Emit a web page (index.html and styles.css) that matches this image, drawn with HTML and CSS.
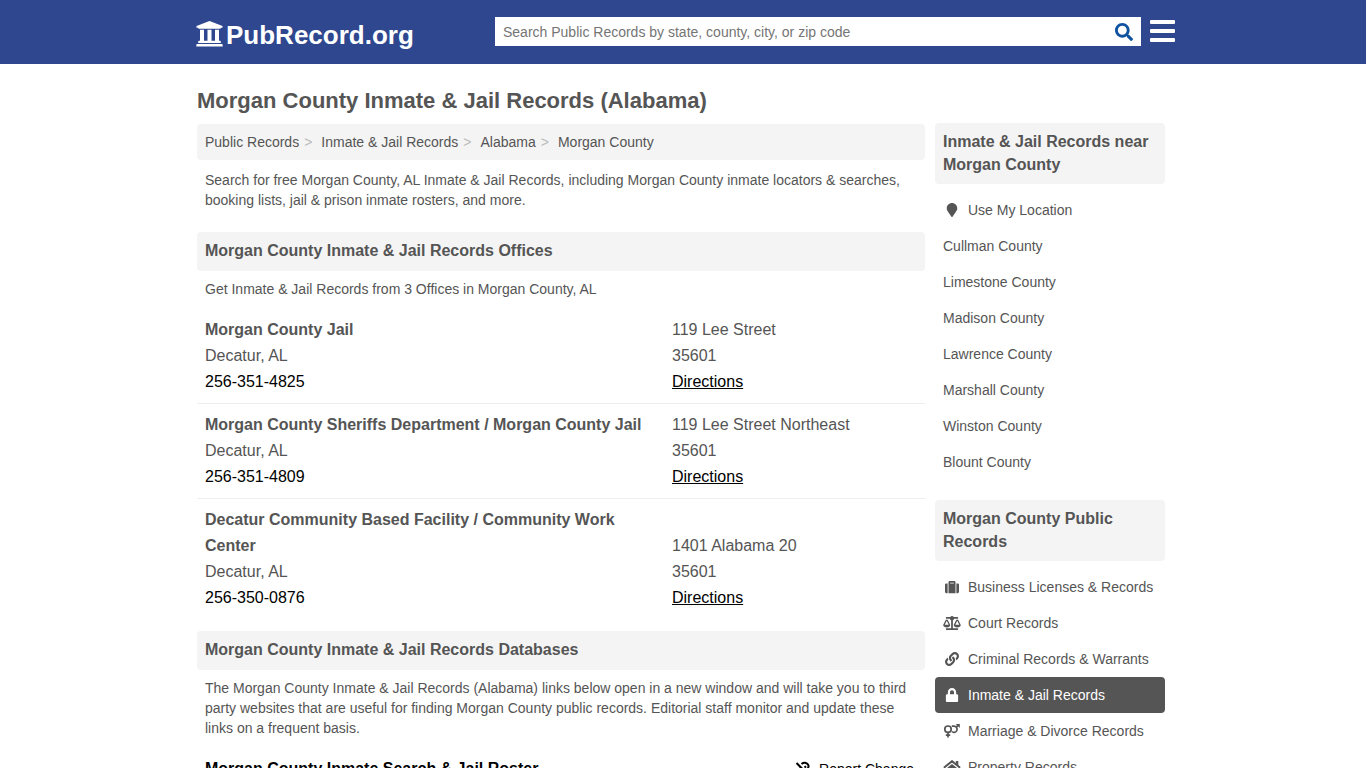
FILE: index.html
```html
<!DOCTYPE html>
<html lang="en">
<head>
<meta charset="utf-8">
<meta name="viewport" content="width=device-width, initial-scale=1">
<title>Morgan County Inmate &amp; Jail Records (Alabama)</title>
<link rel="stylesheet" href="styles.css">
</head>
<body>
<header class="site-header">
  <div class="header-row">
    <a class="logo" href="#">
      <svg class="logo-icon" viewBox="0 0 27 26" aria-hidden="true"><path d="M13.500 0 26.500 5v1.700h-1.700c0 .6-.4 1-1 1H3.200c-.6 0-1-.4-1-1H.5V5zM4 8.700h4v11.300H4zM11.500 8.700h4v11.300h-4zM19 8.700h4v11.300h-4zM3.200 19.800h20.600c.6 0 1 .4 1 1v1.200H2.200v-1.200c0-.6.400-1 1-1zM1.500 23h24c.7 0 1.200.5 1.200 1.200v1.300H.3v-1.300c0-.7.5-1.200 1.200-1.200z"/></svg>
      <span>PubRecord.org</span>
    </a>
    <div class="header-tools">
      <form class="search" role="search">
        <input class="search-input" type="text" aria-label="Search Public Records" placeholder="Search Public Records by state, county, city, or zip code">
        <button class="search-button" type="button" aria-label="Search">
          <svg class="search-icon" viewBox="0 0 512 512" aria-hidden="true"><path d="M505 442.700L405.300 343c-4.500-4.500-10.600-7-17-7H372c27.600-35.300 44-79.700 44-128C416 93.100 322.900 0 208 0S0 93.100 0 208s93.100 208 208 208c48.300 0 92.700-16.400 128-44v16.300c0 6.400 2.500 12.500 7 17l99.700 99.700c9.400 9.400 24.600 9.400 33.900 0l28.300-28.300c9.400-9.400 9.400-24.600.1-34zM208 336c-70.700 0-128-57.200-128-128 0-70.700 57.200-128 128-128 70.700 0 128 57.200 128 128 0 70.700-57.200 128-128 128z"/></svg>
        </button>
      </form>
      <button class="menu-button" type="button" aria-label="Menu"><span class="bar"></span><span class="bar"></span><span class="bar"></span></button>
    </div>
  </div>
</header>
<div class="columns">
  <main class="main">
    <h1 class="title">Morgan County Inmate &amp; Jail Records (Alabama)</h1>
    <nav aria-label="Breadcrumb">
      <ol class="crumbs">
        <li><a href="#">Public Records</a></li>
        <li><a href="#">Inmate &amp; Jail Records</a></li>
        <li><a href="#">Alabama</a></li>
        <li><a href="#">Morgan County</a></li>
      </ol>
    </nav>
    <p class="text intro">Search for free Morgan County, AL Inmate &amp; Jail Records, including Morgan County inmate locators &amp; searches, booking lists, jail &amp; prison inmate rosters, and more.</p>
    <h2 class="band">Morgan County Inmate &amp; Jail Records Offices</h2>
    <p class="text">Get Inmate &amp; Jail Records from 3 Offices in Morgan County, AL</p>
    <div class="offices">
      <article class="office">
        <div><h3 class="name">Morgan County Jail</h3><p>Decatur, AL</p><a class="phone" href="#">256-351-4825</a></div>
        <div><p>119 Lee Street</p><p>35601</p><a class="directions" href="#">Directions</a></div>
      </article>
      <article class="office">
        <div><h3 class="name">Morgan County Sheriffs Department / Morgan County Jail</h3><p>Decatur, AL</p><a class="phone" href="#">256-351-4809</a></div>
        <div><p>119 Lee Street Northeast</p><p>35601</p><a class="directions" href="#">Directions</a></div>
      </article>
      <article class="office">
        <div><h3 class="name">Decatur Community Based Facility / Community Work Center</h3><p>Decatur, AL</p><a class="phone" href="#">256-350-0876</a></div>
        <div><p>1401 Alabama 20</p><p>35601</p><a class="directions" href="#">Directions</a></div>
      </article>
    </div>
    <h2 class="band">Morgan County Inmate &amp; Jail Records Databases</h2>
    <p class="text">The Morgan County Inmate &amp; Jail Records (Alabama) links below open in a new window and will take you to third party websites that are useful for finding Morgan County public records. Editorial staff monitor and update these links on a frequent basis.</p>
    <div class="database">
      <a class="database-link" href="#">Morgan County Inmate Search &amp; Jail Roster</a>
      <a class="report" href="#">
        <svg class="report-icon" viewBox="0 0 16 16" aria-hidden="true"><path d="M1.500 2 14 14.500M6.500 3c2.500-2 5-1.500 6.500.5 1 1.600.7 3-.6 4.300L10.500 9.500M9.500 6.500l1.500-1.300M6 6.500 3.500 9c-3 3.500 1.500 7 4.500 4l1-1" fill="none" stroke="#000" stroke-width="2"/></svg>
        <span>Report Change</span>
      </a>
    </div>
  </main>
  <aside class="side">
    <section class="side-block">
      <h2 class="band side-band">Inmate &amp; Jail Records near Morgan County</h2>
      <ul class="links">
        <li><a class="link" href="#"><svg class="icon" viewBox="-64 0 512 512" aria-hidden="true"><path d="M172.268 501.670C26.970 291.031 0 269.413 0 192 0 85.961 85.961 0 192 0s192 85.961 192 192c0 77.413-26.970 99.031-172.268 309.670-9.535 13.774-29.930 13.773-39.464 0z"/></svg>Use My Location</a></li>
        <li><a class="link" href="#">Cullman County</a></li>
        <li><a class="link" href="#">Limestone County</a></li>
        <li><a class="link" href="#">Madison County</a></li>
        <li><a class="link" href="#">Lawrence County</a></li>
        <li><a class="link" href="#">Marshall County</a></li>
        <li><a class="link" href="#">Winston County</a></li>
        <li><a class="link" href="#">Blount County</a></li>
      </ul>
    </section>
    <section class="side-block">
      <h2 class="band side-band">Morgan County Public Records</h2>
      <ul class="links">
        <li><a class="link" href="#"><svg class="icon" viewBox="0 0 512 512" aria-hidden="true"><path d="M128 480h256V80c0-26.500-21.500-48-48-48H176c-26.500 0-48 21.500-48 48v400zm64-384h128v32H192V96zm320 80v256c0 26.500-21.500 48-48 48h-48V128h48c26.500 0 48 21.500 48 48zM96 480H48c-26.500 0-48-21.500-48-48V176c0-26.500 21.500-48 48-48h48v352z"/></svg>Business Licenses &amp; Records</a></li>
        <li><a class="link" href="#"><svg class="icon" viewBox="0 0 640 512" aria-hidden="true"><path d="M256 336h-.02c0-16.180 1.340-8.730-85.050-181.510-17.650-35.290-68.190-35.360-85.870 0C-2.060 328.750.020 320.330.020 336H0c0 44.180 57.310 80 128 80s128-35.820 128-80zM128 176l72 144H56l72-144zm511.980 160c0-16.180 1.340-8.730-85.050-181.510-17.650-35.290-68.190-35.360-85.870 0-87.120 174.260-85.040 165.840-85.040 181.510H384c0 44.180 57.310 80 128 80s128-35.820 128-80h-.02zM440 320l72-144 72 144H440zm88 128H352V153.250c23.510-10.290 41.160-31.480 46.390-57.250H528c8.840 0 16-7.160 16-16V48c0-8.840-7.160-16-16-16H383.640C369.040 12.680 346.090 0 320 0s-49.040 12.680-63.640 32H112c-8.840 0-16 7.160-16 16v32c0 8.840 7.160 16 16 16h129.610c5.230 25.760 22.870 46.960 46.390 57.250V448H112c-8.840 0-16 7.160-16 16v32c0 8.840 7.160 16 16 16h416c8.840 0 16-7.160 16-16v-32c0-8.840-7.160-16-16-16z"/></svg>Court Records</a></li>
        <li><a class="link" href="#"><svg class="icon" viewBox="0 0 512 512" aria-hidden="true"><path d="M326.612 185.391c59.747 59.809 58.927 155.698.36 214.590-.11.12-.24.25-.36.37l-67.200 67.200c-59.270 59.270-155.699 59.262-214.960 0-59.270-59.260-59.270-155.700 0-214.960l37.106-37.106c9.840-9.840 26.786-3.300 27.294 10.606.648 17.722 3.826 35.527 9.690 52.721 1.986 5.822.567 12.262-3.783 16.612l-13.087 13.087c-28.026 28.026-28.905 73.660-1.155 101.960 28.024 28.579 74.086 28.749 102.325.51l67.200-67.190c28.191-28.191 28.073-73.757 0-101.830-3.701-3.694-7.429-6.564-10.341-8.569a16.037 16.037 0 0 1-6.947-12.606c-.396-10.567 3.348-21.456 11.698-29.806l21.054-21.055c5.521-5.521 14.182-6.199 20.584-1.731a152.482 152.482 0 0 1 20.522 17.197zM467.547 44.449c-59.261-59.262-155.690-59.270-214.960 0l-67.200 67.200c-.12.12-.25.25-.36.37-58.566 58.892-59.387 154.781.36 214.590a152.454 152.454 0 0 0 20.521 17.196c6.402 4.468 15.064 3.789 20.584-1.731l21.054-21.055c8.350-8.350 12.094-19.239 11.698-29.806a16.037 16.037 0 0 0-6.947-12.606c-2.912-2.005-6.640-4.875-10.341-8.569-28.073-28.073-28.191-73.639 0-101.830l67.200-67.190c28.239-28.239 74.300-28.069 102.325.51 27.750 28.300 26.872 73.934-1.155 101.960l-13.087 13.087c-4.350 4.350-5.769 10.790-3.783 16.612 5.864 17.194 9.042 34.999 9.690 52.721.509 13.906 17.454 20.446 27.294 10.606l37.106-37.106c59.271-59.259 59.271-155.699.001-214.959z"/></svg>Criminal Records &amp; Warrants</a></li>
        <li><a class="link active" href="#" aria-current="page"><svg class="icon" viewBox="-32 0 512 512" aria-hidden="true"><path d="M400 224h-24v-72C376 68.200 307.800 0 224 0S72 68.200 72 152v72H48c-26.500 0-48 21.500-48 48v192c0 26.500 21.500 48 48 48h352c26.500 0 48-21.500 48-48V272c0-26.500-21.500-48-48-48zm-104 0H152v-72c0-39.700 32.300-72 72-72s72 32.300 72 72v72z"/></svg>Inmate &amp; Jail Records</a></li>
        <li><a class="link" href="#"><svg class="icon" viewBox="0 0 18 14" aria-hidden="true"><g fill="none" stroke="currentColor" stroke-width="1.700"><circle cx="5" cy="5.200" r="3.200"/><path d="M5 8.400V13.500M2.800 11.200h4.400M8.800 2.200H11a3.100 3.100 0 1 1-2.200 5.300M13 3.300 15.500 1"/></g><path d="M12.800 0H16.800v4z"/></svg>Marriage &amp; Divorce Records</a></li>
        <li><a class="link" href="#"><svg class="icon" viewBox="0 0 18 14" aria-hidden="true"><path d="M9 4 15.200 9V14H11v-3.500H7V14H2.800V9z"/><path d="M.9 7.800 9 1.200l8.100 6.600" fill="none" stroke="currentColor" stroke-width="2"/><path d="M12.800 1h2.500v4.500l-2.500-2z"/></svg>Property Records</a></li>
      </ul>
    </section>
  </aside>
</div>
</body>
</html>
```
FILE: styles.css
```css
* { box-sizing: border-box; }
body {
  margin: 0;
  background: #fff;
  color: #555;
  font: 14px/20px "Liberation Sans", Arial, sans-serif;
}
h1, h2, h3, p, ul, ol { margin: 0; padding: 0; }
ul, ol { list-style: none; }
a { color: inherit; text-decoration: none; }
svg { fill: currentColor; flex: none; }

.site-header { background: #2e478f; color: #fff; }
.header-row {
  display: flex;
  align-items: center;
  justify-content: space-between;
  max-width: 984px;
  height: 64px;
  margin: 0 auto;
  padding: 0 0 2px 5px;
}
.logo {
  display: flex;
  align-items: center;
  gap: 3px;
  padding-top: 8px;
  font-size: 26px;
  font-weight: bold;
  line-height: 30px;
}
.logo-icon { width: 27px; height: 26px; margin-bottom: 2px; }
.header-tools {
  display: flex;
  flex: 0 1 680px;
  gap: 9px;
  min-width: 0;
}
.search {
  display: flex;
  flex: 1;
  height: 29px;
  background: #fff;
}
.search-input {
  flex: 1;
  min-width: 0;
  border: 0;
  padding: 2px 8px 0;
  background: transparent;
  color: #555;
  font: inherit;
}
.search-input::placeholder { color: #757575; opacity: 1; }
.search-button {
  display: flex;
  align-items: center;
  border: 0;
  padding: 2px 8px 0;
  background: transparent;
  color: #0f53a0;
}
.search-icon { width: 18px; height: 18px; }
.menu-button {
  display: flex;
  flex-direction: column;
  justify-content: center;
  gap: 5px;
  width: 25px;
  padding: 0;
  border: 0;
  background: transparent;
}
.bar { height: 4px; width: 100%; border-radius: 1px; background: #fff; }

.columns {
  display: flex;
  gap: 10px;
  max-width: 976px;
  margin: 0 auto;
  padding: 22px 6px 0 2px;
}
.main { flex: 1; min-width: 0; }
.title { font-size: 22px; line-height: 30px; margin-bottom: 8px; }
.crumbs {
  display: flex;
  flex-wrap: wrap;
  padding: 8px;
  border-radius: 4px;
  background: #f4f4f4;
}
.crumbs li + li::before {
  content: ">";
  padding: 0 9px 0 5px;
  color: #bbb;
}
.text { padding: 8px; }
.intro { padding: 10px 8px 22px; }
.band {
  padding: 7px 8px 9px;
  border-radius: 4px;
  background: #f4f4f4;
  font-size: 16px;
  line-height: 23px;
}
.offices {
  padding: 2px 0 12px;
  font-size: 16px;
  line-height: 26px;
}
.office {
  display: grid;
  grid-template-columns: 451px 1fr;
  gap: 16px;
  align-items: end;
  padding: 8px;
}
.office + .office { border-top: 1px solid #eee; }
.name { font-size: 16px; }
.phone, .directions { color: #000; }
.directions { text-decoration: underline; }
.database {
  display: flex;
  justify-content: space-between;
  padding: 10px 11px 8px 8px;
  color: #000;
  line-height: 26px;
}
.database-link { font-size: 16px; font-weight: bold; }
.report { display: flex; align-items: center; gap: 8px; }
.report-icon { width: 16px; height: 16px; }

.side { flex: 0 0 230px; padding-top: 37px; }
.side-block { padding-bottom: 20px; }
.side-band { margin-bottom: 8px; padding-bottom: 8px; }
.links { display: flex; flex-direction: column; }
.link {
  display: flex;
  align-items: center;
  gap: 7px;
  padding: 8px;
  border-radius: 4px;
}
.icon { width: 18px; height: 14px; }
.active { background: #555; color: #fff; }
```
